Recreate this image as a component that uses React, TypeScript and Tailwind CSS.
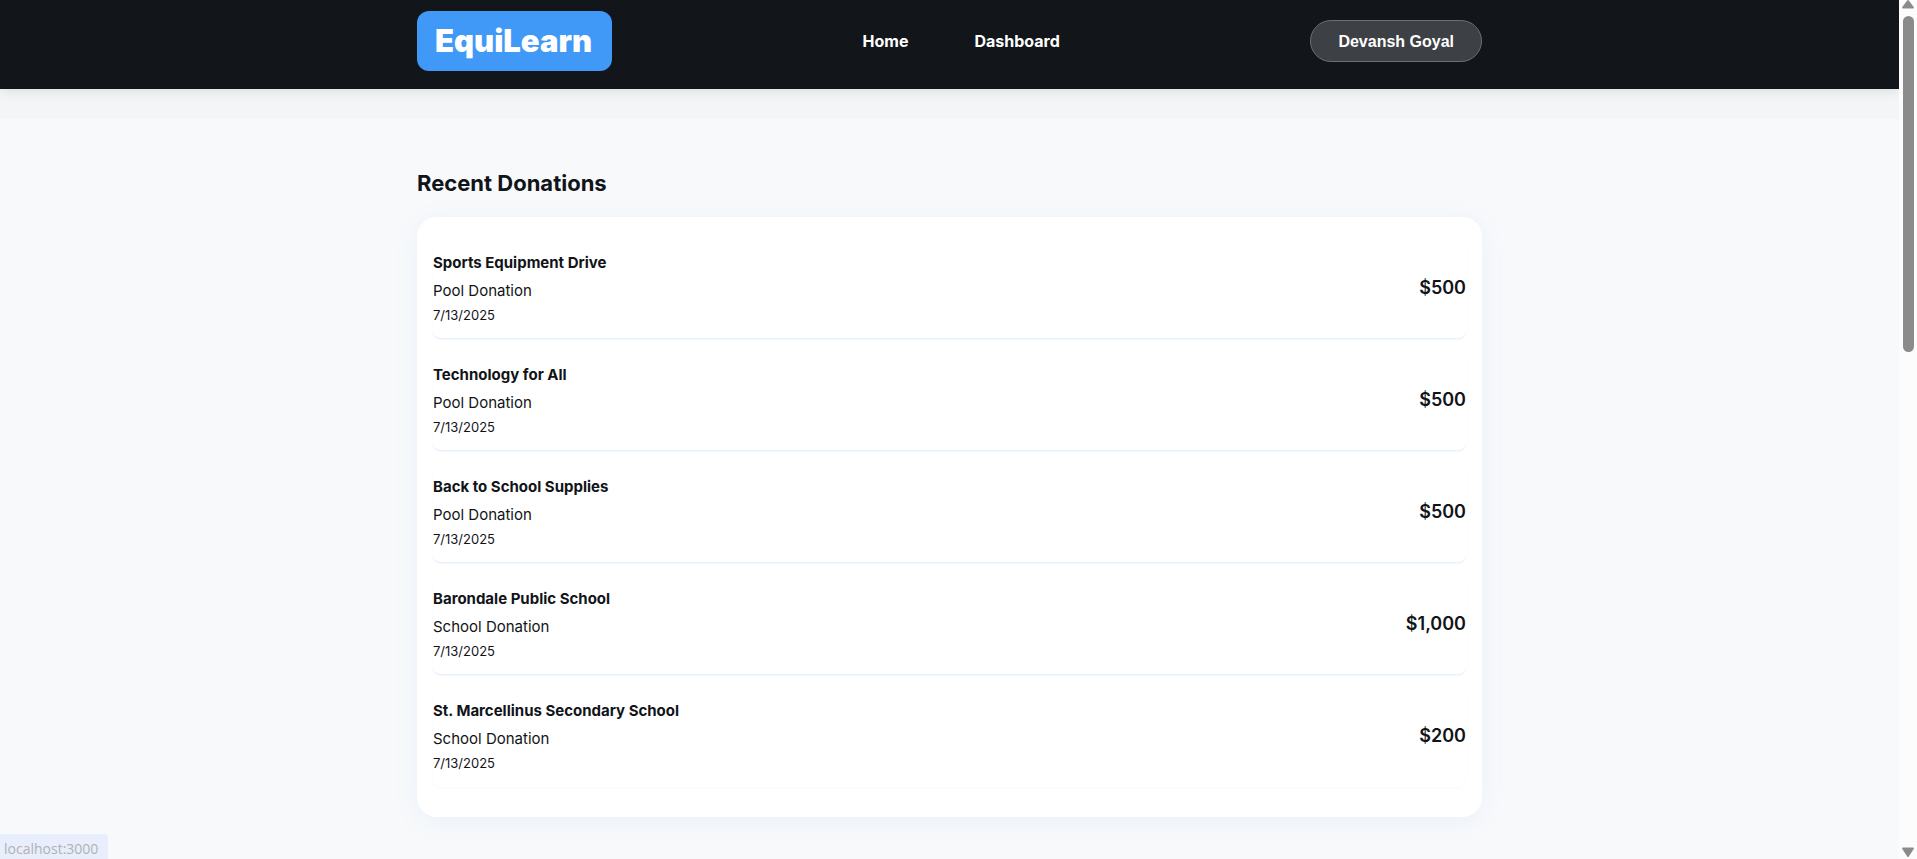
type Donation = {
  name: string;
  kind: 'Pool' | 'School';
  date: string;
  amount: number;
};

const DONATIONS: Donation[] = [
  { name: 'Sports Equipment Drive', kind: 'Pool', date: '7/13/2025', amount: 500 },
  { name: 'Technology for All', kind: 'Pool', date: '7/13/2025', amount: 500 },
  { name: 'Back to School Supplies', kind: 'Pool', date: '7/13/2025', amount: 500 },
  { name: 'Barondale Public School', kind: 'School', date: '7/13/2025', amount: 1000 },
  { name: 'St. Marcellinus Secondary School', kind: 'School', date: '7/13/2025', amount: 200 },
];

function Header() {
  return (
    <header className="relative bg-[#12161b] pt-[11px] pb-[18px] shadow-[0_2px_12px_rgba(0,0,0,0.1)]">
      <div className="max-w-[1065px] mx-auto flex items-center justify-between">
        <a
          href="#"
          className="h-[60px] pl-[18px] pr-5 flex items-center rounded-xl bg-[#4099f7] text-[31px] font-black text-white"
        >
          EquiLearn
        </a>
        <nav className="flex items-center gap-[66px] text-base font-bold text-white">
          <a href="#home">Home</a>
          <a href="#dashboard">Dashboard</a>
        </nav>
        <button
          type="button"
          className="h-[42px] px-[27px] pt-0.5 rounded-full border border-[#6b6e72] bg-[#3d4044] font-['Liberation_Sans',sans-serif] text-base font-bold text-white"
        >
          Devansh Goyal
        </button>
      </div>
    </header>
  );
}

function DonationRow({ donation }: { donation: Donation }) {
  return (
    <li className="h-[102px] flex items-center justify-between rounded-lg border-b border-[#e0effc] bg-white shadow-[0_1px_3px_rgba(0,0,0,0.03)] last:border-transparent">
      <div className="pt-0.5">
        <h3 className="text-[15px] leading-6 font-bold">{donation.name}</h3>
        <p className="mt-1 text-[15px] leading-6">{donation.kind} Donation</p>
        <p className="text-[13px] leading-6">{donation.date}</p>
      </div>
      <span className="text-lg font-semibold">${donation.amount.toLocaleString('en-US')}</span>
    </li>
  );
}

// Browser scrollbar at the right edge of the window
function Scrollbar() {
  return (
    <div className="w-[18px] shrink-0 flex flex-col items-center bg-[#fcfcfc] text-[#8b8b8b]">
      <svg width="12" height="9" viewBox="0 0 12 9" fill="currentColor">
        <path d="M5.2 0.6Q6 -0.4 6.8 0.6L11.7 7Q12.3 8.4 11 8.5H1Q-0.3 8.4 0.3 7Z" />
      </svg>
      <div className="mt-[7px] h-[336px] w-[11px] rounded-full bg-[#8b8b8b]" />
      <svg className="mt-auto mb-[2px]" width="12" height="10" viewBox="0 0 12 10" fill="currentColor">
        <path d="M5.2 9.4Q6 10.4 6.8 9.4L11.7 2Q12.3 0.6 11 0.5H1Q-0.3 0.6 0.3 2Z" />
      </svg>
    </div>
  );
}

export default function App() {
  return (
    <div className="relative flex h-screen overflow-hidden font-['Inter',sans-serif] text-[#111418]">
      <div className="flex-1 min-w-0 overflow-hidden bg-[#f8f9fb]">
        <Header />
        <div className="h-[30px] bg-[#f4f5f7]" />
        <main className="max-w-[1065px] mx-auto pt-[48px]">
          <h2 className="text-[22px] leading-8 font-bold">Recent Donations</h2>
          <ul className="mt-[18px] px-4 pt-5 pb-[30px] space-y-[10px] rounded-[20px] bg-white shadow-[0_4px_24px_rgba(64,153,247,0.08)]">
            {DONATIONS.map((donation) => (
              <DonationRow key={donation.name} donation={donation} />
            ))}
          </ul>
        </main>
      </div>
      <Scrollbar />
      <div className="absolute bottom-0 left-0 h-[25px] w-[108px] pl-1 rounded-tr bg-[#e8eefb] font-['Open_Sans',sans-serif] text-sm leading-[30px] text-[#b0b2b6]">
        localhost:3000
      </div>
    </div>
  );
}
